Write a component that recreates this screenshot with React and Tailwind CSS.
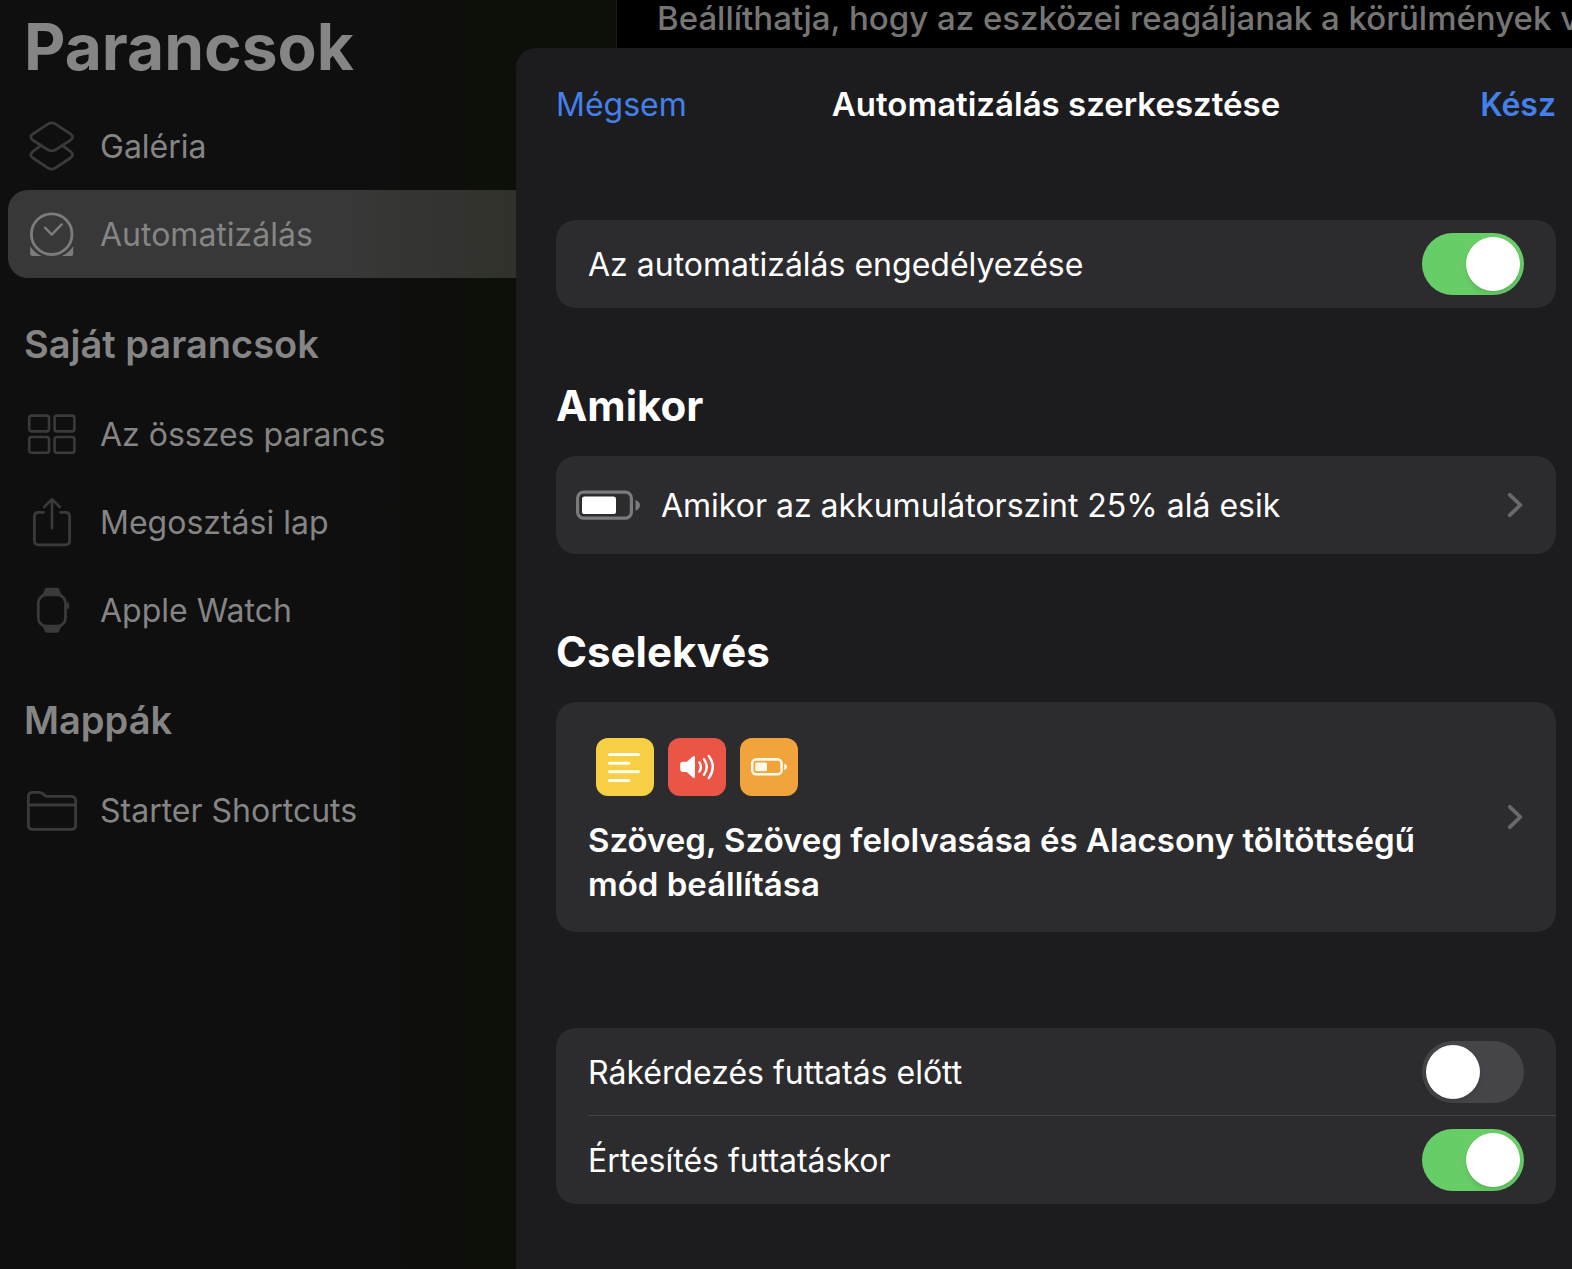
import React, { useState } from "react";

const iconProps = {
  viewBox: "0 0 56 56",
  fill: "none",
  stroke: "currentColor",
  strokeWidth: 2.8,
  strokeLinecap: "round",
  strokeLinejoin: "round",
  "aria-hidden": true,
  className: "size-14 shrink-0",
};

const GalleryIcon = () => (
  <svg {...iconProps}>
    <path d="M23.8 6.1q3.9-2.5 7.8 0l14.8 9.8q4.4 3.2 0 6.4l-14.8 9.4q-3.9 2.5-7.8 0l-14.8-9.4q-4.4-3.2 0-6.4z" />
    <path d="M16.2 28.2l-7.2 5.2q-4.4 3.3 0 6.6l14.8 9.9q3.9 2.5 7.8 0l14.8-9.9q4.4-3.3 0-6.6l-7.2-5.2" />
  </svg>
);

const ClockIcon = () => (
  <svg {...iconProps}>
    <circle cx="27.7" cy="28.2" r="20.3" />
    <path d="M21 21.7l6.7 7 10-10.3" strokeWidth="2.4" />
    <path
      d="M6.2 40.2Q10.8 47 17.6 50H8.2q-2 0-2-2zM49.2 40.2Q44.6 47 37.8 50h9.4q2 0 2-2z"
      fill="currentColor"
      stroke="none"
    />
  </svg>
);

const GridIcon = () => (
  <svg {...iconProps} strokeWidth="2.6">
    <rect x="5.2" y="9.6" width="19.8" height="15.8" rx="2.4" />
    <rect x="30.6" y="9.6" width="19.8" height="15.8" rx="2.4" />
    <rect x="5.2" y="31" width="19.8" height="15.8" rx="2.4" />
    <rect x="30.6" y="31" width="19.8" height="15.8" rx="2.4" />
  </svg>
);

const ShareIcon = () => (
  <svg {...iconProps}>
    <path d="M20.6 18.4h-6q-4.2 0-4.2 4.2v24q0 4.2 4.2 4.2h26.8q4.2 0 4.2-4.2v-24q0-4.2-4.2-4.2h-6" strokeLinecap="butt" />
    <path d="M28 34.2V5.2M20.2 13L28 5.2l7.8 7.8" strokeWidth="2.5" />
  </svg>
);

const WatchIcon = () => (
  <svg {...iconProps}>
    <rect x="14.3" y="12.9" width="27.2" height="31.2" rx="8" />
    <path
      d="M17.4 13.2q2.4-2 3-5 .5-2.4 2.6-2.4h10q2.1 0 2.6 2.4.6 3 3 5zM17.4 43.4q2.4 2 3 5 .5 2.4 2.6 2.4h10q2.1 0 2.6-2.4.6-3 3-5zM42.5 20.2h1q1.6 0 1.6 2v3q0 2-1.6 2h-1z"
      fill="currentColor"
      stroke="none"
    />
  </svg>
);

const FolderIcon = () => (
  <svg {...iconProps}>
    <path d="M4.4 43V14.8q0-4.4 4.4-4.4h6.6q1.8 0 3.2 1.2l1.8 1.5q1.4 1.2 3.2 1.2h23.6q4.4 0 4.4 4.4V43q0 4.4-4.4 4.4H8.8q-4.4 0-4.4-4.4zM5 23h46" />
  </svg>
);

const BatteryIcon = () => (
  <svg width="65" height="30" viewBox="0 0 65 30" fill="none" aria-hidden="true" className="shrink-0">
    <rect x="1.6" y="2.2" width="53.8" height="26" rx="6" stroke="#7b7b7d" strokeWidth="3.2" />
    <rect x="6" y="6.4" width="34" height="17.6" rx="2.6" fill="#fff" />
    <path d="M59.5 10q4.5 1.8 4.5 5.4t-4.5 5.4z" fill="#7b7b7d" />
  </svg>
);

const Chevron = () => (
  <svg width="18" height="28" viewBox="0 0 18 28" fill="none" aria-hidden="true" className="shrink-0">
    <path d="M3.8 3.8L14.4 14 3.8 24.2" stroke="#69696c" strokeWidth="3.8" strokeLinecap="round" strokeLinejoin="round" />
  </svg>
);

const TextTile = () => (
  <svg viewBox="0 0 58 58" aria-hidden="true" className="size-[58px] rounded-xl bg-[#f7cf45]">
    <path d="M13.5 16.6h29M13.5 25.2h19.4M13.5 33.8h29M13.5 42.4h19.4" stroke="#fffdf0" strokeWidth="3" strokeLinecap="round" />
  </svg>
);

const SpeakTile = () => (
  <svg viewBox="0 0 58 58" fill="none" aria-hidden="true" className="size-[58px] rounded-xl bg-[#ea5545]">
    <path d="M14.6 23.8h4.2l6-5.2q2.2-1.4 2.2 1v18.8q0 2.4-2.2 1l-6-5.4h-4.2q-2.4 0-2.4-2.4v-5.4q0-2.4 2.4-2.4z" fill="#fff" />
    <path d="M31.4 24.4q3 4.6 0 9.2M36 21.2q5.4 7.8 0 15.6M40.8 18q8 11 0 22" stroke="#fff" strokeWidth="2.4" strokeLinecap="round" />
  </svg>
);

const LowPowerTile = () => (
  <svg viewBox="0 0 58 58" fill="none" aria-hidden="true" className="size-[58px] rounded-xl bg-[#f1a33c]">
    <rect x="12.2" y="21.4" width="29.4" height="14.8" rx="4" stroke="#fff9ea" strokeWidth="2.6" />
    <rect x="15.2" y="24.4" width="11.8" height="8.8" rx="1.4" fill="#fff9ea" />
    <path d="M44.2 25.4q3 1.2 3 3.4t-3 3.4z" fill="#fff9ea" />
  </svg>
);

const NavItem = ({ icon, label, active }) => (
  <li className="pl-2">
    <a
      href="#"
      className={
        active
          ? "flex h-22 items-center gap-5 rounded-[20px] bg-linear-to-r from-[#383838] from-55% to-[#2f312a] to-85% pl-4 text-[#7c7c7c]"
          : "flex h-22 items-center gap-5 pl-4 text-[#3a3a3a]"
      }
    >
      {icon}
      <span className="pt-0.5 text-[32px] text-[#858585]">{label}</span>
    </a>
  </li>
);

const NavHeading = ({ children }) => (
  <h2 className="flex h-28 items-center px-6 pt-5 text-[38px] font-semibold text-[#858585]">{children}</h2>
);

const SwitchRow = ({ label, checked, onChange }) => (
  <label className="flex h-22 items-center justify-between pr-8 text-[32px]">
    <span className="pt-0.5">{label}</span>
    <input
      type="checkbox"
      role="switch"
      checked={checked}
      onChange={(e) => onChange(e.target.checked)}
      className="h-[62px] w-[102px] shrink-0 appearance-none rounded-full bg-[#454449] p-1 before:block before:size-[54px] before:rounded-full before:bg-white before:shadow-md checked:bg-[#67ce67] checked:before:translate-x-10"
    />
  </label>
);

const App = () => {
  const [enabled, setEnabled] = useState(true);
  const [askFirst, setAskFirst] = useState(false);
  const [notify, setNotify] = useState(true);

  return (
    <div className="grid min-h-screen grid-cols-1 overflow-hidden bg-black font-['Inter','Noto_Sans',sans-serif]">
      {/* dimmed app behind the sheet */}
      <div className="col-start-1 row-start-1 flex min-w-0">
        <nav className="w-[617px] shrink-0 border-r border-[#1a1b18] bg-linear-to-r from-[#0f0f0f] from-60% to-[#0d0f09] to-80%">
          <h1 className="px-6 pt-1 pb-3 text-[64px] leading-[86px] font-bold text-[#858585]">Parancsok</h1>
          <ul>
            <NavItem icon={<GalleryIcon />} label="Galéria" />
            <NavItem icon={<ClockIcon />} label="Automatizálás" active />
          </ul>
          <NavHeading>Saját parancsok</NavHeading>
          <ul>
            <NavItem icon={<GridIcon />} label="Az összes parancs" />
            <NavItem icon={<ShareIcon />} label="Megosztási lap" />
            <NavItem icon={<WatchIcon />} label="Apple Watch" />
          </ul>
          <NavHeading>Mappák</NavHeading>
          <ul>
            <NavItem icon={<FolderIcon />} label="Starter Shortcuts" />
          </ul>
        </nav>
        <main className="min-w-0 flex-1 overflow-hidden pl-10">
          <p className="text-[33px] leading-9 font-medium whitespace-nowrap text-[#757674]">
            Beállíthatja, hogy az eszközei reagáljanak a körülmények v
          </p>
        </main>
      </div>

      {/* edit sheet */}
      <section
        role="dialog"
        aria-labelledby="sheet-title"
        className="z-10 col-start-1 row-start-1 mt-12 ml-[516px] rounded-tl-[20px] bg-[#1c1c1e] pr-4 pl-10 text-white"
      >
        <header className="grid h-28 grid-cols-[1fr_auto_1fr] items-center pt-0.5">
          <button type="button" className="justify-self-start text-[32px] text-[#4480ea]">
            Mégsem
          </button>
          <h2 id="sheet-title" className="text-[33px] font-semibold">
            Automatizálás szerkesztése
          </h2>
          <button type="button" className="justify-self-end text-[32px] font-semibold text-[#4480ea]">
            Kész
          </button>
        </header>

        <div className="mt-[60px] rounded-[20px] bg-[#2c2c2e] pl-8">
          <SwitchRow label="Az automatizálás engedélyezése" checked={enabled} onChange={setEnabled} />
        </div>

        <h3 className="mt-[72px] mb-6 text-[42px] leading-[52px] font-bold">Amikor</h3>
        <button
          type="button"
          className="flex h-[98px] w-full items-center rounded-[20px] bg-[#2c2c2e] pr-8 pl-5 text-left text-[32px]"
        >
          <BatteryIcon />
          <span className="flex-1 pt-0.5 pl-5">Amikor az akkumulátorszint 25% alá esik</span>
          <Chevron />
        </button>

        <h3 className="mt-[72px] mb-6 text-[42px] leading-[52px] font-bold">Cselekvés</h3>
        <button type="button" className="flex w-full items-center rounded-[20px] bg-[#2c2c2e] pr-8 pl-8 text-left">
          <span className="flex-1 pt-9 pr-20 pb-[26px]">
            <span className="flex gap-[14px] pl-2">
              <TextTile />
              <SpeakTile />
              <LowPowerTile />
            </span>
            <span className="mt-[22px] block text-[33px] leading-11 font-semibold">
              Szöveg, Szöveg felolvasása és Alacsony töltöttségű mód beállítása
            </span>
          </span>
          <Chevron />
        </button>

        <div className="mt-24 mb-16 divide-y divide-[#434345] rounded-[20px] bg-[#2c2c2e] pl-8">
          <SwitchRow label="Rákérdezés futtatás előtt" checked={askFirst} onChange={setAskFirst} />
          <SwitchRow label="Értesítés futtatáskor" checked={notify} onChange={setNotify} />
        </div>
      </section>
    </div>
  );
};

export default App;
